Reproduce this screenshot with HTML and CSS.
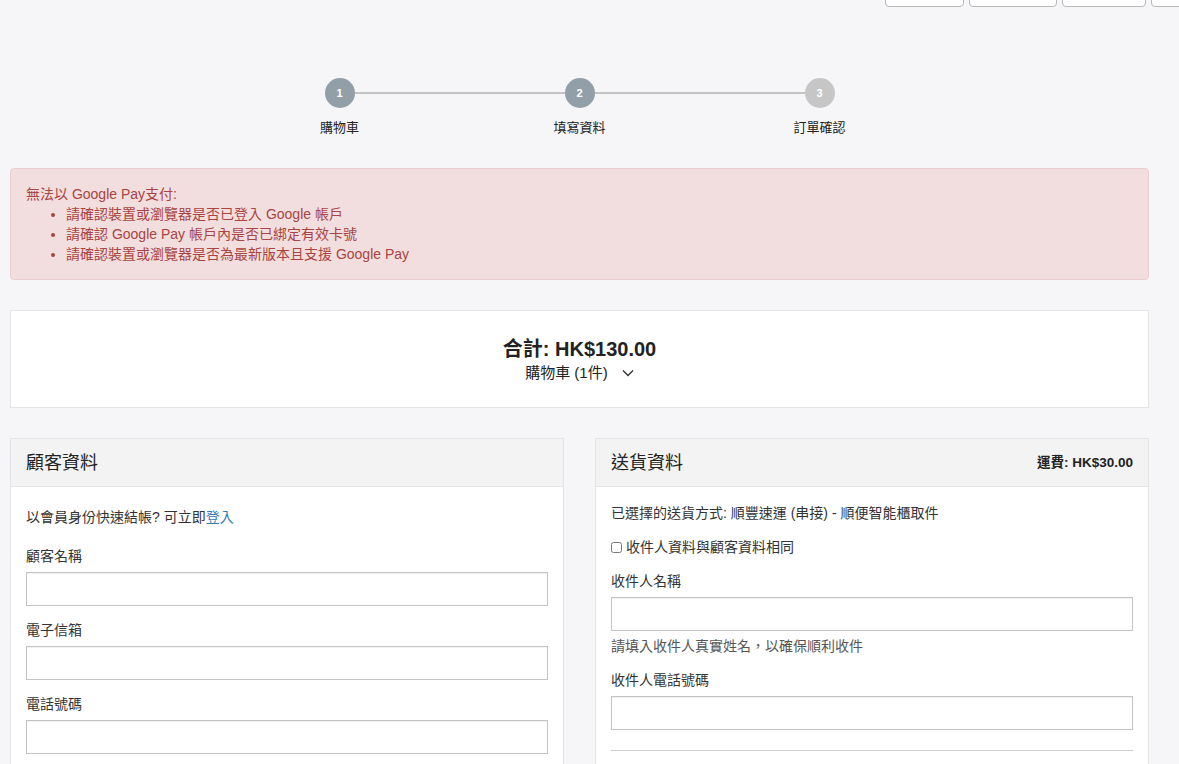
FILE: index.html
```html
<!DOCTYPE html>
<html lang="zh-Hant">
<head>
  <meta charset="UTF-8" />
  <meta name="viewport" content="width=device-width, initial-scale=1.0" />
  <title>結帳</title>
  <link rel="stylesheet" href="styles.css">
</head>
<body>
  <div class="topbar">
    <span class="top-btn w79"></span>
    <span class="top-btn w88"></span>
    <span class="top-btn w84"></span>
    <span class="top-btn w84"></span>
  </div>

  <div class="page">
    <ol class="stepper">
      <li class="step done"><span class="dot">1</span><span class="step-label">購物車</span></li>
      <li class="step done"><span class="dot">2</span><span class="step-label">填寫資料</span></li>
      <li class="step"><span class="dot">3</span><span class="step-label">訂單確認</span></li>
    </ol>

    <div class="alert">
      <div>無法以 Google Pay支付:</div>
      <ul>
        <li>請確認裝置或瀏覽器是否已登入 Google 帳戶</li>
        <li>請確認 Google Pay 帳戶內是否已綁定有效卡號</li>
        <li>請確認裝置或瀏覽器是否為最新版本且支援 Google Pay</li>
      </ul>
    </div>

    <div class="summary">
      <div class="summary-total">合計: HK$130.00</div>
      <div class="summary-cart">購物車 (1件)
        <svg class="chevron" width="12" height="8" viewBox="0 0 12 8"><path d="M1 1.5 L6 6.5 L11 1.5" fill="none" stroke="#333" stroke-width="1.4"/></svg>
      </div>
    </div>

    <div class="columns">
      <section class="panel">
        <div class="panel-head"><h3>顧客資料</h3></div>
        <div class="panel-body customer">
          <p class="intro">以會員身份快速結帳? 可立即<a href="#">登入</a></p>
          <div class="form-group">
            <label>顧客名稱</label>
            <input type="text" />
          </div>
          <div class="form-group">
            <label>電子信箱</label>
            <input type="text" />
          </div>
          <div class="form-group">
            <label>電話號碼</label>
            <input type="text" />
          </div>
        </div>
      </section>

      <section class="panel">
        <div class="panel-head"><h3>送貨資料</h3><span class="fee">運費: HK$30.00</span></div>
        <div class="panel-body delivery">
          <p class="method">已選擇的送貨方式: 順豐速運 (串接) - 順便智能櫃取件</p>
          <label class="check"><input type="checkbox" /> 收件人資料與顧客資料相同</label>
          <div class="form-group">
            <label>收件人名稱</label>
            <input type="text" />
            <p class="help">請填入收件人真實姓名，以確保順利收件</p>
          </div>
          <div class="form-group">
            <label>收件人電話號碼</label>
            <input type="text" />
          </div>
          <hr />
        </div>
      </section>
    </div>
  </div>
</body>
</html>
```

FILE: styles.css
```css
:root {
  --bg: #f6f6f8;
  --text: #333333;
  --border: #e4e4e4;
  --step-on: #939fa8;
  --step-off: #c6c6c6;
  --danger-bg: #f2dede;
  --danger-border: #ebccd1;
  --danger-text: #a94442;
  --link: #337ab7;
}
* {
  box-sizing: border-box;
}
html, body {
  overflow: hidden;
}
body {
  margin: 0;
  background: var(--bg);
  color: var(--text);
  font-family: 'Liberation Sans', Arial, 'Noto Sans CJK TC', sans-serif;
  font-size: 14px;
  line-height: 20px;
}
.topbar {
  display: flex;
  gap: 5px;
  padding-left: 885px;
  height: 7px;
  overflow: hidden;
}
.top-btn {
  flex: none;
  height: 30px;
  margin-top: -23px;
  background: #fff;
  border: 1px solid #b9b9bc;
  border-radius: 4px;
}
.w79 { width: 79px; }
.w88 { width: 88px; }
.w84 { width: 84px; }
.page {
  width: 1139px;
  margin-left: 10px;
}
.stepper {
  list-style: none;
  display: flex;
  justify-content: center;
  margin: 71px 0 0;
  padding: 0;
}
.step {
  position: relative;
  width: 240px;
  display: flex;
  flex-direction: column;
  align-items: center;
}
.step + .step::before {
  content: '';
  position: absolute;
  top: 14px;
  left: -50%;
  width: 100%;
  height: 2px;
  background: #c3c3c3;
}
.dot {
  position: relative;
  z-index: 1;
  width: 30px;
  height: 30px;
  border-radius: 50%;
  background: var(--step-off);
  color: #fff;
  font-size: 11px;
  font-weight: bold;
  line-height: 30px;
  text-align: center;
}
.step.done .dot {
  background: var(--step-on);
}
.step-label {
  margin-top: 10px;
  color: #222;
  font-size: 13px;
}
.alert {
  margin-top: 30px;
  padding: 15px 15px 15px;
  background: var(--danger-bg);
  border: 1px solid var(--danger-border);
  border-radius: 4px;
  color: var(--danger-text);
}
.alert ul {
  margin: 0;
  padding-left: 40px;
}
.summary {
  margin-top: 30px;
  padding: 25px 15px 24px;
  background: #fff;
  border: 1px solid var(--border);
  text-align: center;
}
.summary-total {
  font-size: 20px;
  font-weight: bold;
  line-height: 26px;
  color: #222;
}
.summary-cart {
  font-size: 15px;
  line-height: 21px;
  color: #222;
}
.chevron {
  margin-left: 10px;
  vertical-align: 1px;
}
.columns {
  display: grid;
  grid-template-columns: 554px 554px;
  gap: 31px;
  margin-top: 30px;
}
.panel {
  background: #fff;
  border: 1px solid var(--border);
  height: 400px;
}
.panel-head {
  display: flex;
  justify-content: space-between;
  align-items: center;
  height: 48px;
  padding: 0 15px;
  background: #f3f3f3;
  border-bottom: 1px solid var(--border);
}
.panel-head h3 {
  margin: 0;
  font-size: 18px;
  font-weight: normal;
  color: #222;
}
.fee {
  font-size: 13.5px;
  font-weight: bold;
  color: #222;
}
.panel-body {
  padding: 0 15px 15px;
}
.customer {
  padding-top: 20px;
}
.delivery {
  padding-top: 16px;
}
p {
  margin: 0;
}
.intro {
  margin-bottom: 19px;
}
.intro a {
  color: var(--link);
  text-decoration: none;
}
.method {
  margin-bottom: 14px;
}
.check {
  display: flex;
  align-items: center;
  gap: 4px;
  margin-bottom: 14px;
}
.check input {
  margin: 0;
  width: 11px;
  height: 11px;
}
.form-group {
  margin-bottom: 14px;
}
.form-group label {
  display: block;
  margin-bottom: 6px;
}
.form-group input {
  display: block;
  width: 100%;
  height: 34px;
  border: 1px solid #c4c4c4;
  border-radius: 0;
  box-shadow: inset 0 1px 1px rgba(0, 0, 0, 0.06);
  font-size: 14px;
}
.help {
  margin-top: 5px;
  color: #555;
}
hr {
  margin: 20px 0 0;
  border: 0;
  border-top: 1px solid #cfcfcf;
}
```
